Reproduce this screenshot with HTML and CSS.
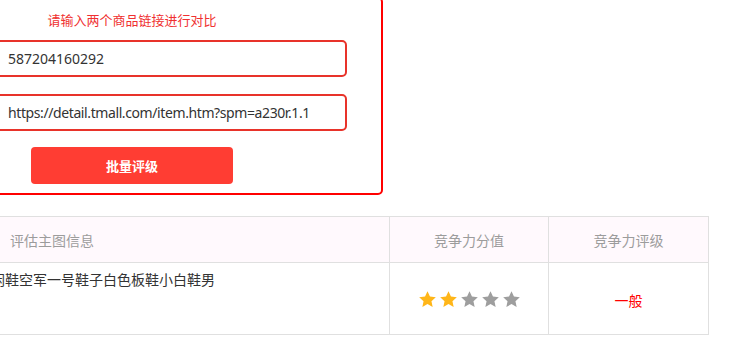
FILE: index.html
```html
<!DOCTYPE html>
<html lang="zh-CN">
<head>
  <meta charset="UTF-8">
  <meta name="viewport" content="width=device-width, initial-scale=1.0">
  <title>商品主图评级对比</title>
  <link rel="stylesheet" href="styles.css">
</head>
<body>
  <div class="panel">
    <div class="tip">请输入两个商品链接进行对比</div>
    <div class="fields">
      <input class="link" type="text" value="587204160292">
      <input class="link url" type="text" value="https://detail.tmall.com/item.htm?spm=a230r.1.14.6.2d6e4c2fJ8vqDk&amp;id=587204160292">
    </div>
    <button class="submit">批量评级</button>
  </div>

  <table class="result">
    <colgroup>
      <col class="col-info">
      <col class="col-score">
      <col class="col-level">
    </colgroup>
    <thead>
      <tr><th class="info-head">评估主图信息</th><th>竞争力分值</th><th>竞争力评级</th></tr>
    </thead>
    <tbody>
      <tr>
        <td class="info">
          <div class="goods">
            <div class="thumb"></div>
            <div class="goods-title">男士休闲鞋空军一号鞋子白色板鞋小白鞋男</div>
          </div>
        </td>
        <td class="score">
          <span class="stars">
            <svg class="star on" viewBox="0 0 24 24"><polygon points="12,1.5 15.1,8.3 22.5,9.1 17,14.1 18.5,21.5 12,17.8 5.5,21.5 7,14.1 1.5,9.1 8.9,8.3"/></svg>
            <svg class="star on" viewBox="0 0 24 24"><polygon points="12,1.5 15.1,8.3 22.5,9.1 17,14.1 18.5,21.5 12,17.8 5.5,21.5 7,14.1 1.5,9.1 8.9,8.3"/></svg>
            <svg class="star" viewBox="0 0 24 24"><polygon points="12,1.5 15.1,8.3 22.5,9.1 17,14.1 18.5,21.5 12,17.8 5.5,21.5 7,14.1 1.5,9.1 8.9,8.3"/></svg>
            <svg class="star" viewBox="0 0 24 24"><polygon points="12,1.5 15.1,8.3 22.5,9.1 17,14.1 18.5,21.5 12,17.8 5.5,21.5 7,14.1 1.5,9.1 8.9,8.3"/></svg>
            <svg class="star" viewBox="0 0 24 24"><polygon points="12,1.5 15.1,8.3 22.5,9.1 17,14.1 18.5,21.5 12,17.8 5.5,21.5 7,14.1 1.5,9.1 8.9,8.3"/></svg>
          </span>
        </td>
        <td class="level">一般</td>
      </tr>
    </tbody>
  </table>
</body>
</html>
```

FILE: styles.css
```css
body {
  margin: 0;
  font-family: 'Noto Sans', 'Noto Sans CJK SC', sans-serif;
  background: #fff;
  color: #333;
  overflow: hidden;
}
.panel {
  width: 502px;
  box-sizing: border-box;
  margin: -3px 0 0 -119px;
  padding: 11px 0 9px;
  border: 2px solid #f00;
  border-radius: 5px;
}
.tip {
  text-align: center;
  font-size: 13px;
  line-height: 20px;
  color: #f03030;
}
.fields {
  display: flex;
  flex-direction: column;
  gap: 17px;
  margin-top: 10px;
  padding: 0 34px 0 113px;
}
.link {
  height: 37px;
  box-sizing: border-box;
  padding: 0 37px 0 10px;
  border: 2px solid #e8332a;
  border-radius: 5px;
  font-family: 'Noto Sans', 'Noto Sans CJK SC', sans-serif;
  font-size: 14px;
  color: #333;
  outline: none;
}
.link.url { letter-spacing: -0.4px; }
.submit {
  display: block;
  width: 202px;
  height: 37px;
  margin: 16px auto 0;
  border: none;
  border-radius: 4px;
  background: #ff3d33;
  color: #fff;
  font-family: 'Noto Sans CJK SC', sans-serif;
  font-size: 13px;
  font-weight: bold;
  cursor: pointer;
}
.result {
  margin: 21px 0 0 -120px;
  border-collapse: collapse;
  table-layout: fixed;
  width: 828px;
}
.col-info { width: 509px; }
.col-score { width: 159px; }
.col-level { width: 160px; }
th, td {
  border: 1px solid #e0e0e0;
  font-size: 14px;
  text-align: center;
  padding: 0;
}
th {
  height: 45px;
  background: #fff9fd;
  color: #9c9c9c;
  font-weight: normal;
}
th.info-head {
  text-align: left;
  padding-left: 129px;
}
td { height: 69px; }
td.info {
  vertical-align: top;
  text-align: left;
}
.goods {
  display: flex;
  gap: 10px;
  padding: 7px 10px;
}
.thumb {
  width: 48px;
  height: 48px;
  flex: none;
  background: #f2f2f2;
}
.goods-title {
  line-height: 20px;
  color: #333;
}
.stars {
  display: inline-flex;
  gap: 2px;
  margin-top: 5px;
}
.star {
  width: 19px;
  height: 19px;
  fill: #9e9e9e;
}
.star.on { fill: #ffb619; }
.level {
  color: #f00;
  padding-top: 2px;
}
```
